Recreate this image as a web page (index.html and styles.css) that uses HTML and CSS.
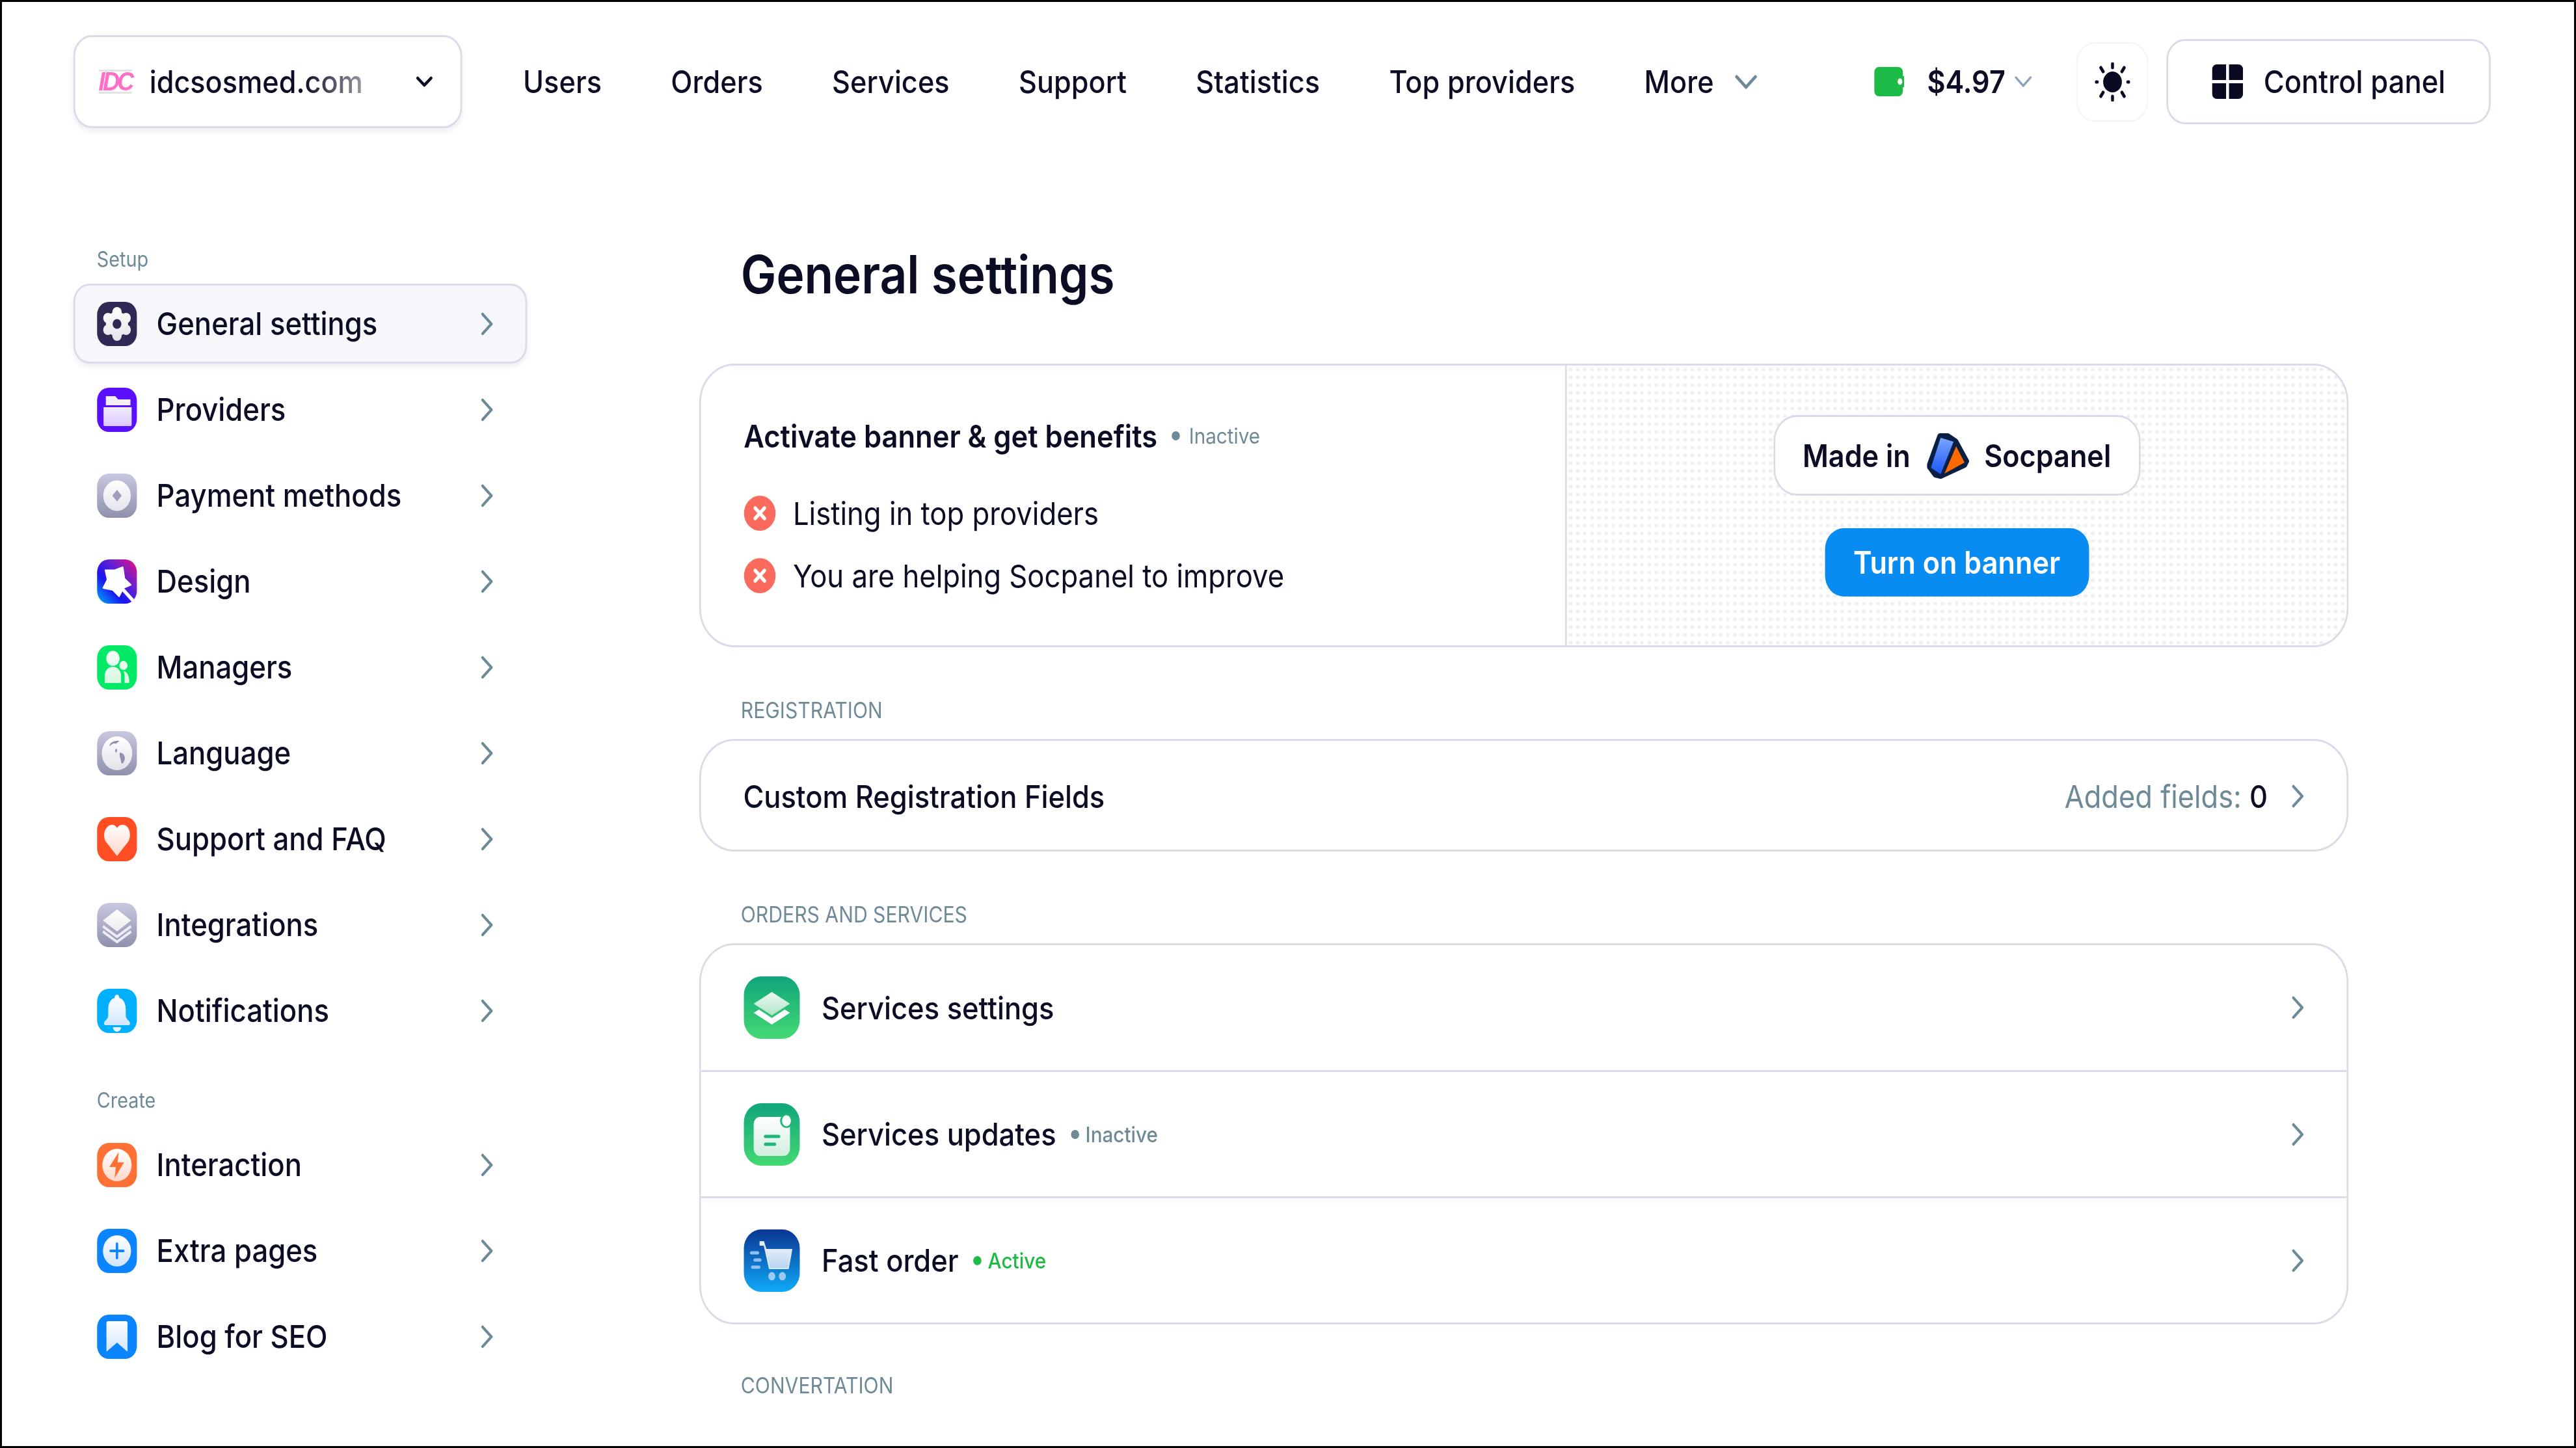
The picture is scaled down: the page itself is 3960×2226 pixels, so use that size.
FILE: index.html
```html
<!DOCTYPE html>
<html lang="en">
<head>
<meta charset="utf-8">
<title>General settings</title>
<link rel="stylesheet" href="styles.css">
</head>
<body>
<svg class="sprite" aria-hidden="true">
  <defs>
    <linearGradient id="w" gradientUnits="userSpaceOnUse" x1="0" y1="8" x2="0" y2="60"><stop offset="0" stop-color="#fff"/><stop offset="1" stop-color="#e2e2ea"/></linearGradient>
    <linearGradient id="lav" gradientUnits="userSpaceOnUse" x1="0" y1="26" x2="0" y2="60"><stop offset="0" stop-color="#f6f0ff"/><stop offset="1" stop-color="#dac8ff"/></linearGradient>
    <linearGradient id="grey" x1="0" y1="0" x2="0" y2="1"><stop offset="0" stop-color="#c8c8df"/><stop offset="1" stop-color="#8f90ad"/></linearGradient>
    <linearGradient id="magic" x1="0" y1="1" x2="1" y2="0"><stop offset="0" stop-color="#00b4ff"/><stop offset=".35" stop-color="#1a14f0"/><stop offset=".65" stop-color="#6a1fd0"/><stop offset="1" stop-color="#ec1080"/></linearGradient>
    <linearGradient id="mint" gradientUnits="userSpaceOnUse" x1="0" y1="12" x2="0" y2="60"><stop offset="0" stop-color="#f2fff6"/><stop offset="1" stop-color="#d5f7e0"/></linearGradient>
    <linearGradient id="peach" gradientUnits="userSpaceOnUse" x1="0" y1="10" x2="0" y2="60"><stop offset="0" stop-color="#fff"/><stop offset="1" stop-color="#ffd6c8"/></linearGradient>
    <linearGradient id="ice" gradientUnits="userSpaceOnUse" x1="0" y1="8" x2="0" y2="60"><stop offset="0" stop-color="#fff"/><stop offset="1" stop-color="#cfe4ff"/></linearGradient>
    <linearGradient id="green" x1="0" y1="0" x2="0" y2="1"><stop offset="0" stop-color="#10a57c"/><stop offset="1" stop-color="#44d972"/></linearGradient>
    <linearGradient id="navy" x1="0" y1="0" x2="0" y2="1"><stop offset="0" stop-color="#0a3592"/><stop offset="1" stop-color="#10aaf8"/></linearGradient>
    <linearGradient id="leaf" gradientUnits="userSpaceOnUse" x1="0" y1="22" x2="0" y2="60"><stop offset="0" stop-color="#f0fbf4"/><stop offset="1" stop-color="#b0e3c6"/></linearGradient>
    <linearGradient id="paper" gradientUnits="userSpaceOnUse" x1="0" y1="22" x2="0" y2="78"><stop offset="0" stop-color="#fff"/><stop offset="1" stop-color="#d4efe0"/></linearGradient>
    <linearGradient id="cartfill" gradientUnits="userSpaceOnUse" x1="0" y1="28" x2="0" y2="62"><stop offset="0" stop-color="#e8eef8"/><stop offset="1" stop-color="#b4d0f0"/></linearGradient>
    <linearGradient id="sblue" x1="0" y1="0" x2="0" y2="1"><stop offset="0" stop-color="#7aa6ff"/><stop offset="1" stop-color="#1a55f5"/></linearGradient>
    <symbol id="chev" viewBox="0 0 21 36"><path d="M3 3 18 18 3 33" fill="none" stroke="currentColor" stroke-width="4.5" stroke-linecap="round" stroke-linejoin="round"/></symbol>
  </defs>
</svg>
<div class="frame">
<div class="page">
  <header class="topbar">
    <div class="site">
      <span class="site-logo">IDC</span>
      <span class="site-name">idcsosmed.com</span>
      <svg class="site-chev" viewBox="0 0 29 17"><path d="M3 3 14.500 14 26 3" fill="none" stroke="#0a0d24" stroke-width="4.500" stroke-linecap="round" stroke-linejoin="round"/></svg>
    </div>
    <nav class="nav">
      <a class="nav-link">Users</a>
      <a class="nav-link">Orders</a>
      <a class="nav-link">Services</a>
      <a class="nav-link">Support</a>
      <a class="nav-link">Statistics</a>
      <a class="nav-link">Top providers</a>
      <a class="nav-link nav-more">More
        <svg class="more-chev" viewBox="0 0 40 22"><path d="M4 3 20 19 36 3" fill="none" stroke="#6f8a97" stroke-width="5" stroke-linecap="round" stroke-linejoin="round"/></svg>
      </a>
    </nav>
    <div class="actions">
      <div class="balance">
        <svg class="wallet" viewBox="0 0 51 45"><path d="M8 0H41A8 8 0 0 1 49 8V14H51V31H49V37A8 8 0 0 1 41 45H8A8 8 0 0 1 0 37V8A8 8 0 0 1 8 0Z" fill="#1dba45"/><ellipse cx="44" cy="22.500" rx="4" ry="5" fill="#fff"/></svg>
        <span class="amount">$4.97</span>
        <svg class="amount-chev" viewBox="0 0 31 17"><path d="M3 2 15.500 15 28 2" fill="none" stroke="#8ea2b8" stroke-width="3.500" stroke-linecap="round" stroke-linejoin="round"/></svg>
      </div>
      <button class="theme" type="button" aria-label="Theme">
        <svg class="sun" viewBox="0 0 60 60"><circle cx="30" cy="30" r="16" fill="#070a20"/><g stroke="#070a20" stroke-width="5" stroke-linecap="round"><path d="M30 2V8M30 52V58M2 30H4M56 30H58M10 8 14 14M50 8 46 14M10 52 14 46M50 52 46 46"/></g></svg>
      </button>
      <button class="panel-btn" type="button">
        <svg class="grid-ico" viewBox="0 0 53 53"><path d="M8 0H24V24H0V8A8 8 0 0 1 8 0ZM29 0H45A8 8 0 0 1 53 8V24H29ZM0 29H24V53H8A8 8 0 0 1 0 45ZM29 29H53V45A8 8 0 0 1 45 53H29Z" fill="#070a20"/></svg>
        <span>Control panel</span>
      </button>
    </div>
  </header>

  <div class="layout">
    <aside class="sidebar">
      <div class="side-label">Setup</div>
      <ul class="side-list">
        <li class="side-item is-active">
          <svg class="side-ico" viewBox="0 0 68 68"><rect width="68" height="68" rx="20" fill="#2e2a55"/><g fill="url(#w)"><circle cx="34" cy="34" r="19"/><circle cx="34" cy="16" r="8"/><circle cx="34" cy="52" r="8"/><circle cx="18.500" cy="25" r="8"/><circle cx="49.500" cy="25" r="8"/><circle cx="18.500" cy="43" r="8"/><circle cx="49.500" cy="43" r="8"/></g><circle cx="34" cy="34" r="7.500" fill="#2e2a55"/></svg>
          <span class="side-text">General settings</span>
          <svg class="chev"><use href="#chev"/></svg>
        </li>
        <li class="side-item">
          <svg class="side-ico" viewBox="0 0 68 68"><rect width="68" height="68" rx="20" fill="#5a10ff"/><path d="M15 13H31L36 18H57V27H15Z" fill="#f4eeff"/><path d="M11 30H59V57A2 2 0 0 1 57 59H13A2 2 0 0 1 11 57Z" fill="url(#lav)"/></svg>
          <span class="side-text">Providers</span>
          <svg class="chev"><use href="#chev"/></svg>
        </li>
        <li class="side-item">
          <svg class="side-ico" viewBox="0 0 68 68"><rect width="68" height="68" rx="20" fill="url(#grey)"/><circle cx="34" cy="34" r="23.500" fill="url(#w)"/><path d="M34 25 42 34 34 43 26 34Z" fill="#9d9ebb"/></svg>
          <span class="side-text">Payment methods</span>
          <svg class="chev"><use href="#chev"/></svg>
        </li>
        <li class="side-item">
          <svg class="side-ico" viewBox="0 0 68 68"><rect width="68" height="68" rx="20" fill="url(#magic)"/><path d="M14 16.500H30L44 11.700 46.800 29.400 57.800 39 45 44 37.600 57 26.700 47 10.200 44 17.500 31Z" fill="#fff" stroke="#fff" stroke-width="2" stroke-linejoin="round"/><path d="M44 46 64 66" stroke="#fff" stroke-width="5.500"/></svg>
          <span class="side-text">Design</span>
          <svg class="chev"><use href="#chev"/></svg>
        </li>
        <li class="side-item">
          <svg class="side-ico" viewBox="0 0 68 68"><rect width="68" height="68" rx="20" fill="#00ea66"/><ellipse cx="27" cy="20" rx="11.500" ry="11.500" fill="url(#mint)"/><circle cx="45" cy="31" r="7" fill="url(#mint)"/><path d="M13 58V47A14 14 0 0 1 41 47V58Z" fill="url(#mint)"/><path d="M46 40C52 41 55 47 55 58H47V47C47 44 46 42 45 40Z" fill="url(#mint)"/></svg>
          <span class="side-text">Managers</span>
          <svg class="chev"><use href="#chev"/></svg>
        </li>
        <li class="side-item">
          <svg class="side-ico" viewBox="0 0 68 68"><rect width="68" height="68" rx="20" fill="url(#grey)"/><circle cx="34" cy="34" r="26" fill="url(#w)"/><path d="M21 23C22 17 30 14 38 15 35 18 32 20 30 19 27 18 25 21 21 23ZM39 33C44 33 49 38 47 44 45 50 42 52 41 47 41 43 37 38 39 33ZM33 27C30 28 30 32 33 33 34 31 35 28 33 27Z" fill="#8e90ad"/></svg>
          <span class="side-text">Language</span>
          <svg class="chev"><use href="#chev"/></svg>
        </li>
        <li class="side-item">
          <svg class="side-ico" viewBox="0 0 68 68"><rect width="68" height="68" rx="20" fill="#ff4d24"/><path d="M34 60 15 38C8 28 14 12 26 12 30 12 32 14 34 17 36 14 39 12 44 12 55 12 60 28 53 38Z" fill="url(#peach)"/></svg>
          <span class="side-text">Support and FAQ</span>
          <svg class="chev"><use href="#chev"/></svg>
        </li>
        <li class="side-item">
          <svg class="side-ico" viewBox="0 0 68 68"><rect width="68" height="68" rx="20" fill="url(#grey)"/><path d="M34 10 58 27 34 44 10 27Z" fill="url(#w)"/><path d="M10 36 34 52 58 36M10 44 34 60 58 44" fill="none" stroke="#ecedf4" stroke-width="4"/></svg>
          <span class="side-text">Integrations</span>
          <svg class="chev"><use href="#chev"/></svg>
        </li>
        <li class="side-item">
          <svg class="side-ico" viewBox="0 0 68 68"><rect width="68" height="68" rx="20" fill="#00b0ff"/><path d="M34 9C37 9 38 12 38 14 46 16 49 24 49 32V42C49 46 54 48 56 52 57 55 55 56 53 56H15C13 56 11 55 12 52 14 48 19 46 19 42V32C19 24 22 16 30 14 30 12 31 9 34 9Z" fill="url(#ice)"/><path d="M27 59H41A7 7 0 0 1 27 59Z" fill="#e9f6ff"/></svg>
          <span class="side-text">Notifications</span>
          <svg class="chev"><use href="#chev"/></svg>
        </li>
      </ul>
      <div class="side-label side-label-create">Create</div>
      <ul class="side-list">
        <li class="side-item">
          <svg class="side-ico" viewBox="0 0 68 68"><rect width="68" height="68" rx="20" fill="#ff7034"/><circle cx="34" cy="34" r="25" fill="url(#peach)"/><path d="M37 14 21 37H32L30 54 46 30H35Z" fill="#ff7034"/></svg>
          <span class="side-text">Interaction</span>
          <svg class="chev"><use href="#chev"/></svg>
        </li>
        <li class="side-item">
          <svg class="side-ico" viewBox="0 0 68 68"><rect width="68" height="68" rx="20" fill="#0a84ff"/><circle cx="34" cy="34" r="24" fill="url(#ice)"/><path d="M34 23V45M23 34H45" stroke="#0a84ff" stroke-width="4" stroke-linecap="round"/></svg>
          <span class="side-text">Extra pages</span>
          <svg class="chev"><use href="#chev"/></svg>
        </li>
        <li class="side-item">
          <svg class="side-ico" viewBox="0 0 68 68"><rect width="68" height="68" rx="20" fill="#0a84ff"/><path d="M19 10H49A3 3 0 0 1 52 13V57L34 43 16 57V13A3 3 0 0 1 19 10Z" fill="url(#ice)"/></svg>
          <span class="side-text">Blog for SEO</span>
          <svg class="chev"><use href="#chev"/></svg>
        </li>
      </ul>
    </aside>

    <main class="main">
      <h1 class="title">General settings</h1>

      <section class="card banner">
        <div class="banner-info">
          <div class="banner-head">
            <span class="banner-title">Activate banner &amp; get benefits</span>
            <span class="status"><i class="dot"></i>Inactive</span>
          </div>
          <ul class="benefits">
            <li class="benefit">
              <svg class="x-ico" viewBox="0 0 54 54"><circle cx="27" cy="27" r="27" fill="#fb6b5d"/><path d="M19 19 35 35M35 19 19 35" stroke="#fff" stroke-width="5.500" stroke-linecap="round"/></svg>
              <span>Listing in top providers</span>
            </li>
            <li class="benefit">
              <svg class="x-ico" viewBox="0 0 54 54"><circle cx="27" cy="27" r="27" fill="#fb6b5d"/><path d="M19 19 35 35M35 19 19 35" stroke="#fff" stroke-width="5.500" stroke-linecap="round"/></svg>
              <span>You are helping Socpanel to improve</span>
            </li>
          </ul>
        </div>
        <div class="banner-side">
          <div class="made">
            <span>Made in</span>
            <svg class="soc-logo" viewBox="0 0 67 71" preserveAspectRatio="none"><path d="M22 5H34L46 13 63 44 60 50 23 67 15 65 6 53 6 49Z" fill="#0a1f44" stroke="#0a1f44" stroke-width="8" stroke-linejoin="round"/><path d="M23 8 43 14 23 64 8 54Z" fill="url(#sblue)"/><path d="M47 21 60 46 29 63Z" fill="#ff6a00"/></svg>
            <span>Socpanel</span>
          </div>
          <button class="turn-on" type="button">Turn on banner</button>
        </div>
      </section>

      <div class="section-label">REGISTRATION</div>
      <section class="card">
        <div class="row row-short">
          <span class="row-text">Custom Registration Fields</span>
          <span class="row-meta">Added fields: <b class="row-count">0</b></span>
          <svg class="chev"><use href="#chev"/></svg>
        </div>
      </section>

      <div class="section-label">ORDERS AND SERVICES</div>
      <section class="card">
        <div class="row">
          <svg class="row-ico" viewBox="0 0 96 96"><rect width="96" height="96" rx="30" fill="url(#green)"/><path d="M48 24 79 42 48 60 17 42Z" fill="url(#leaf)"/><path d="M26 51 48 64 70 51 79 56 48 74 17 56Z" fill="#fff"/></svg>
          <span class="row-text">Services settings</span>
          <svg class="chev row-end"><use href="#chev"/></svg>
        </div>
        <div class="row">
          <svg class="row-ico" viewBox="0 0 96 96"><rect width="96" height="96" rx="30" fill="url(#green)"/><rect x="17" y="21" width="62" height="60" rx="11" fill="url(#paper)"/><ellipse cx="73" cy="27" rx="11" ry="11" fill="#24b878"/><ellipse cx="73" cy="27" rx="7.500" ry="8.500" fill="#fff"/><path d="M37 51H60M37 63H53" stroke="#1fb478" stroke-width="5" stroke-linecap="round"/></svg>
          <span class="row-text">Services updates</span>
          <span class="status status-row"><i class="dot"></i>Inactive</span>
          <svg class="chev row-end"><use href="#chev"/></svg>
        </div>
        <div class="row">
          <svg class="row-ico" viewBox="0 0 96 96"><rect width="96" height="96" rx="30" fill="url(#navy)"/><path d="M28 19H34L38 31H82L76 60H44L35 24H28Z" fill="url(#cartfill)" stroke="#dfe9f6" stroke-width="2" stroke-linejoin="round"/><path d="M13 36H24M19 47H28M15 58H26" stroke="#8fc0f0" stroke-width="5" stroke-linecap="round"/><ellipse cx="48" cy="72" rx="6" ry="6.500" fill="#9ccaf5"/><ellipse cx="66" cy="72" rx="6" ry="6.500" fill="#9ccaf5"/></svg>
          <span class="row-text">Fast order</span>
          <span class="status status-row status-on"><i class="dot"></i>Active</span>
          <svg class="chev row-end"><use href="#chev"/></svg>
        </div>
      </section>

      <div class="section-label section-label-last">CONVERTATION</div>
    </main>
  </div>
</div>
</div>
</body>
</html>
```

FILE: styles.css
```css
* { box-sizing: border-box; }
html, body { margin: 0; padding: 0; background: #fff; }
body { width: 3960px; height: 2226px; overflow: hidden; font-family: Inter, "Liberation Sans", sans-serif; color: #0a0d24; }
ul { list-style: none; margin: 0; padding: 0; }
button { font: inherit; color: inherit; background: #fff; cursor: pointer; }
.sprite { position: absolute; width: 0; height: 0; }

/* The reference is horizontally condensed: the whole page is laid out at natural proportions, then squeezed. */
.frame { width: 3960px; height: 2226px; border: 3px solid #000; overflow: hidden; }
.page { width: 4393px; height: 2220px; transform: scaleX(.9); transform-origin: 0 0; }

/* Top bar */
.topbar { display: flex; align-items: center; height: 143px; margin-top: 51px; padding: 0 142px 0 122px; font-size: 48px; font-weight: 500; }
.site { display: flex; align-items: center; flex: none; width: 664px; height: 143px; padding: 0 47px 0 40px; border: 3px solid #d9dbe8; border-radius: 32px; box-shadow: 0 5px 8px rgba(120, 125, 160, .12); }
.site-logo { flex: none; width: 57px; height: 37px; border-top: 3px solid #e3e3e3; border-bottom: 3px solid #e3e3e3; font-family: "Liberation Sans", sans-serif; font-size: 40px; line-height: 31px; font-weight: 700; font-style: italic; letter-spacing: -4px; color: #ff6ec7; }
.site-name { margin-left: 30px; background: linear-gradient(90deg, #0a0d24 72%, #9a9aa4 100%); -webkit-background-clip: text; background-clip: text; color: transparent; }
.site-chev { width: 29px; height: 17px; margin-left: auto; }
.nav { display: flex; align-items: center; gap: 118px; margin-left: 104px; letter-spacing: .1px; }
.nav-link { white-space: nowrap; }
.nav-more { display: flex; align-items: center; gap: 35px; }
.more-chev { width: 40px; height: 22px; }
.actions { display: flex; align-items: center; margin-left: auto; }
.balance { display: flex; align-items: center; }
.wallet { width: 51px; height: 45px; }
.amount { margin-left: 39px; font-weight: 600; }
.amount-chev { width: 31px; height: 17px; margin-left: 15px; }
.theme { display: flex; align-items: center; justify-content: center; width: 123px; height: 122px; margin-left: 75px; padding: 0; border: 2px solid #f3f4f7; border-radius: 32px; }
.sun { width: 60px; height: 60px; }
.panel-btn { display: flex; align-items: center; gap: 35px; width: 554px; height: 131px; margin-left: 31px; padding: 0 0 0 75px; border: 3px solid #d9dbe8; border-radius: 32px; font-size: 48.500px; font-weight: 500; white-space: nowrap; }
.grid-ico { width: 53px; height: 53px; }

/* Layout */
.layout { display: grid; grid-template-columns: 775px 2817px; column-gap: 294px; margin: 177px 0 0 122px; }

/* Sidebar */
.sidebar { padding-top: 5px; }
.side-label { height: 40px; padding-left: 40px; font-size: 32px; line-height: 40px; color: #6f8a97; }
.side-label-create { margin-top: 57px; }
.side-list { display: flex; flex-direction: column; gap: 9px; margin-top: 17px; }
.side-item { display: flex; align-items: center; height: 123px; padding: 0 55px 0 37px; border: 3px solid transparent; border-radius: 28px; font-size: 48.500px; font-weight: 500; }
.side-item.is-active { background: #f6f7fb; border-color: #d9dbe8; box-shadow: 0 5px 8px rgba(120, 125, 160, .12); }
.side-ico { flex: none; width: 69px; height: 68px; }
.side-text { margin-left: 33px; white-space: nowrap; }
.chev { flex: none; width: 21px; height: 36px; margin-left: auto; color: #6f8a97; }

/* Main */
.title { height: 96px; margin: 0 0 89px 71px; font-size: 81px; line-height: 96px; font-weight: 600; }
.card { border: 3px solid #d9dbe8; border-radius: 60px; overflow: hidden; background: #fff; }
.section-label { height: 40px; margin: 77px 0 24px 71px; font-size: 33.500px; line-height: 40px; color: #6f8a97; }
.section-label-last { margin-top: 74px; }

.banner { display: flex; height: 436px; }
.banner-info { flex: none; width: 1479px; padding: 78px 0 0 73px; border-right: 3px solid #d9dbe8; }
.banner-head { display: flex; align-items: center; height: 60px; font-size: 48.300px; }
.banner-title { font-weight: 600; }
.status { display: inline-flex; align-items: center; gap: 15px; margin-left: 25px; font-size: 33px; color: #6f8a97; }
.status-row { gap: 11px; margin-left: 25px; }
.status-on { color: #1dba45; }
.dot { width: 14px; height: 14px; border-radius: 50%; background: currentColor; }
.benefits { display: flex; flex-direction: column; gap: 42px; margin-top: 62px; }
.benefit { display: flex; align-items: center; gap: 29px; height: 54px; font-size: 48.500px; }
.x-ico { flex: none; width: 55px; height: 54px; }
.banner-side { flex: 1; display: flex; flex-direction: column; align-items: center; justify-content: center; gap: 50px; background-color: #fff; background-image: radial-gradient(ellipse 4px 3.500px, #eeeff2 60%, transparent 100%); background-size: 12.220px 12px; }
.made { display: flex; align-items: center; justify-content: center; gap: 26px; width: 627px; height: 124px; padding-top: 2px; border: 3px solid #d9dbe8; border-radius: 40px; background: #fff; font-size: 48px; font-weight: 600; }
.soc-logo { width: 74px; height: 71px; }
.turn-on { width: 451px; height: 105px; padding: 0; border: 0; border-radius: 32px; background: #088cf2; color: #fff; font-size: 48px; font-weight: 600; }

.row { display: flex; align-items: center; height: 194px; padding: 0 73px; border-top: 3px solid #d9dbe8; font-size: 48.300px; font-weight: 500; }
.row:first-child { height: 192px; border-top: 0; }
.row-short:first-child { height: 167px; padding: 3px 73px 0 72px; }
.row-ico { flex: none; width: 96px; height: 96px; margin-right: 37px; }
.row-text { white-space: nowrap; }
.row-meta { margin-left: auto; font-weight: 400; color: #6f8a97; }
.row-count { font-weight: 500; color: #0a0d24; }
.row-meta + .chev { margin-left: 41px; }
.row-end { margin-left: auto; }
```
